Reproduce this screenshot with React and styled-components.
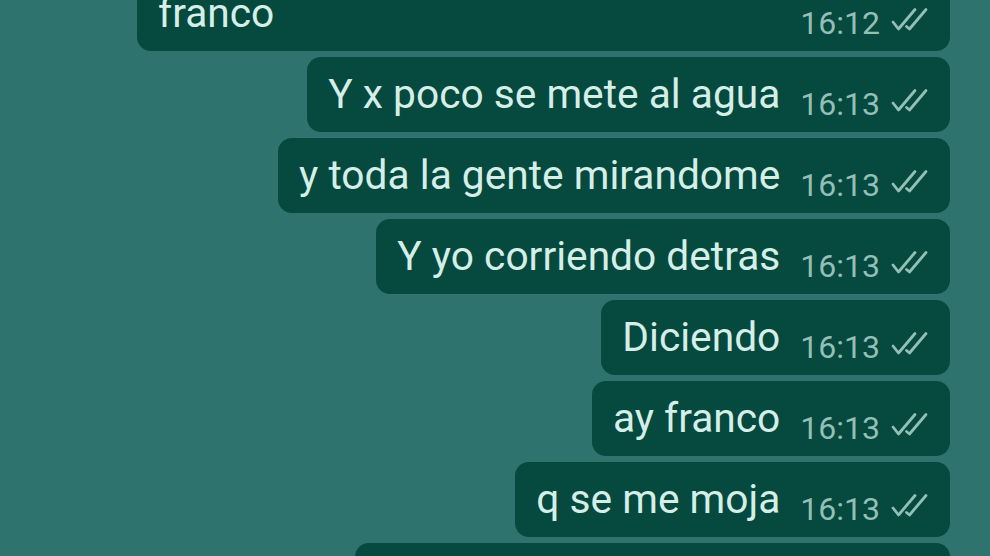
import styled, { createGlobalStyle } from "styled-components";

const GlobalStyle = createGlobalStyle`
  html, body {
    margin: 0;
    padding: 0;
    background: #2e736e;
    overflow: hidden;
  }
  body {
    font-family: Roboto, "Noto Sans", sans-serif;
  }
`;

const Chat = styled.div`
  width: 990px;
  height: 556px;
  overflow: hidden;
  background: #2e736e;
  display: flex;
  flex-direction: column;
  align-items: flex-end;
  gap: 6px;
  padding-right: 40px;
  box-sizing: border-box;
`;

const Bubble = styled.div`
  display: flex;
  align-items: flex-start;
  justify-content: space-between;
  box-sizing: border-box;
  height: 75px;
  flex-shrink: 0;
  padding: 0 20px 0 21px;
  border-radius: 14px;
  background: #06493f;
  width: ${(p) => (p.$width ? `${p.$width}px` : "auto")};

  &:first-child {
    margin-top: -24px;
  }
`;

const Text = styled.span`
  margin-top: 17px;
  font-size: 40.7px;
  line-height: 1;
  color: #d5efe8;
  white-space: nowrap;
`;

const Meta = styled.div`
  display: flex;
  align-items: flex-start;
  margin-left: 20px;
`;

const Time = styled.span`
  margin-top: 31px;
  font-size: 32px;
  line-height: 1;
  color: #93bfb7;
  white-space: nowrap;
`;

const Ticks = styled.svg`
  margin-top: 31px;
  margin-left: 10px;
  width: 40px;
  height: 26px;
`;

const DoubleCheck = () => (
  <Ticks viewBox="0 0 40 26" fill="none">
    <path
      d="M3 15 L8.5 22 L25 2.5"
      stroke="#93bfb7"
      strokeWidth="2.8"
      strokeLinecap="round"
      strokeLinejoin="round"
    />
    <path
      d="M16.5 19.5 L19.5 22 L36 2.5"
      stroke="#93bfb7"
      strokeWidth="2.8"
      strokeLinecap="round"
      strokeLinejoin="round"
    />
  </Ticks>
);

const messages = [
  { text: "franco", time: "16:12", width: 813 },
  { text: "Y x poco se mete al agua", time: "16:13" },
  { text: "y toda la gente mirandome", time: "16:13" },
  { text: "Y yo corriendo detras", time: "16:13" },
  { text: "Diciendo", time: "16:13" },
  { text: "ay franco", time: "16:13" },
  { text: "q se me moja", time: "16:13" },
  { text: "Y me miraba la gente", time: "16:13", width: 595 },
];

export default function App() {
  return (
    <>
      <GlobalStyle />
      <Chat>
        {messages.map((m, i) => (
          <Bubble key={i} $width={m.width}>
            <Text>{m.text}</Text>
            <Meta>
              <Time>{m.time}</Time>
              <DoubleCheck />
            </Meta>
          </Bubble>
        ))}
      </Chat>
    </>
  );
}
